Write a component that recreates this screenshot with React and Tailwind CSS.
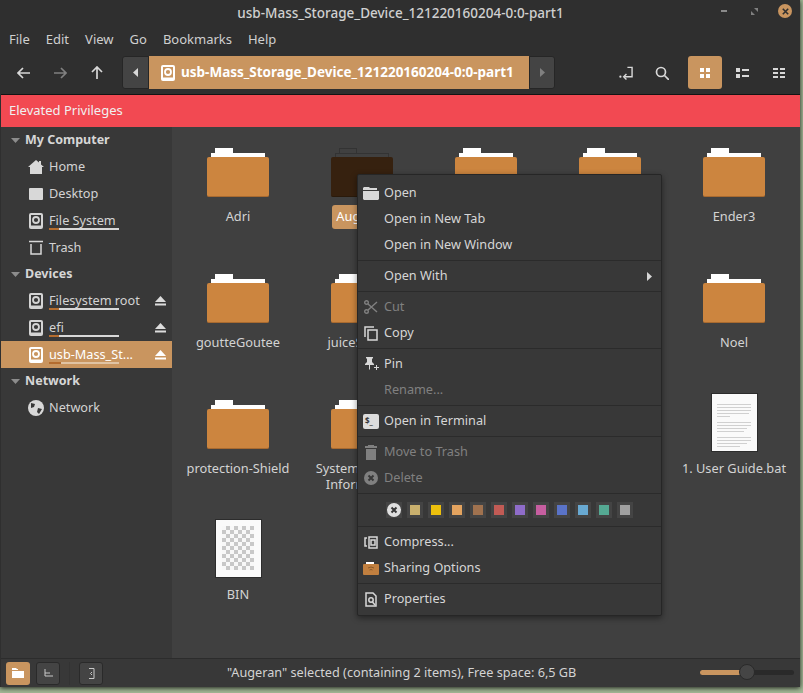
const font = { fontFamily: '"Noto Sans", "Open Sans", sans-serif' };

function DriveIcon({ color = "#d4d4d4", inner = "#383838" }) {
  return (
    <svg width="14" height="16" viewBox="0 0 14 16" className="shrink-0">
      <rect x="0" y="0" width="14" height="16" rx="2" fill={color} />
      <rect x="2" y="2" width="10" height="10.500" fill={inner} />
      <circle cx="7" cy="7" r="3" fill="none" stroke={color} strokeWidth="1.800" />
    </svg>
  );
}

function Folder({ dark }) {
  return (
    <div className="w-[62px] h-[49px] flex flex-col items-start">
      <div className={`ml-[8px] w-[18px] h-[5px] ${dark ? "border border-b-0 border-[#333333]" : "bg-white"}`} />
      <div className={`ml-[4px] w-[54px] h-[4px] ${dark ? "border border-b-0 border-[#333333]" : "bg-white"}`} />
      <div className={`w-[62px] h-[40px] rounded-[2px] ${dark ? "bg-[#36210f] border-b border-[#2a1a0b]" : "bg-[#cc853f] border-b border-[#a86a30]"}`} />
    </div>
  );
}

function FileTile({ name, dark, selected, children }) {
  return (
    <div className="flex flex-col items-center w-[124px]">
      <div className="h-[70px] flex items-end">{children || <Folder dark={dark} />}</div>
      <div
        className={`mt-[8px] pt-[3px] pb-[5px] text-center leading-[16px] text-[12.8px] px-[4px] rounded-[3px] ${
          selected ? "bg-[#c9955f] text-white" : "text-[#d3d3d3]"
        }`}
      >
        {name}
      </div>
    </div>
  );
}

function PaperIcon({ kind }) {
  const rows = [1, 1, 1, 0.95, 0.4, 0, 1, 1, 0.9, 0.8, 0, 1, 1, 0.9, 0.7];
  return (
    <div className="w-[47px] h-[59px] -mb-[3px] bg-[#fafafa] border border-[#2c2c2c] flex flex-col items-start">
      {kind === "doc" ? (
        <div className="pt-[10px] pl-[5px] flex flex-col gap-[2px] w-full">
          {rows.map((r, i) => (
            <div key={i} className={`h-[1px] ${r ? "bg-[#d0d0d0]" : ""}`} style={{ width: `${r * 34}px` }} />
          ))}
        </div>
      ) : (
        <div className="mt-[6px] ml-[6px] grid grid-cols-8 w-[32px]">
          {Array.from({ length: 88 }).map((_, i) => (
            <div
              key={i}
              className={`h-[4px] w-[4px] ${(Math.floor(i / 8) + i % 8) % 2 === 0 ? "bg-[#f8f8f8]" : "bg-[#c8c8c8]"}`}
            />
          ))}
        </div>
      )}
    </div>
  );
}

function Triangle() {
  return (
    <svg width="9" height="5" viewBox="0 0 9 5" className="shrink-0">
      <path d="M0 0h9L4.500 5z" fill="#8c8c8c" />
    </svg>
  );
}

function Eject({ color = "#dcdcdc" }) {
  return (
    <svg width="11" height="10" viewBox="0 0 11 10">
      <path d="M5.500 0L11 6H0z" fill={color} />
      <rect y="7.500" width="11" height="2" fill={color} />
    </svg>
  );
}

function Heading({ label }) {
  return (
    <div className="h-[26px] flex items-center pl-[10px] gap-[5px] text-[12.5px] font-bold text-[#d6d6d6]">
      <Triangle />
      <span>{label}</span>
    </div>
  );
}

function SideRow({ icon, label, usage, eject, active }) {
  return (
    <div className={`h-[27px] flex items-center pl-[27px] pr-[6px] relative ${active ? "bg-[#c9955f] text-white" : "text-[#d3d3d3]"}`}>
      <div className="w-[16px] mr-[5px] flex items-center justify-center">{icon}</div>
      <span className="text-[12.7px] w-[96px] whitespace-nowrap">{label}</span>
      {eject && (
        <span className="ml-auto flex">
          <Eject color={active ? "#fff" : "#dcdcdc"} />
        </span>
      )}
      {usage && (
        <div className={`absolute left-[48px] top-[21px] w-[70px] h-[2px] ${active ? "bg-[#e0c3a3]" : "bg-[#d8d8d8]"}`}>
          <div className={`${active ? "w-[12px]" : "w-[10px]"} h-[2px] bg-[#b36c2f]`} />
        </div>
      )}
    </div>
  );
}

function Item({ icon, label, disabled, arrow }) {
  return (
    <div className={`h-[26px] flex items-center pl-[5px] pr-[9px] text-[12.7px] ${disabled ? "text-[#808080]" : "text-[#d6d6d6]"}`}>
      <div className="w-[16px] h-[16px] mr-[5px] flex items-center justify-center">{icon}</div>
      <span>{label}</span>
      {arrow && (
        <svg width="5" height="9" viewBox="0 0 5 9" className="ml-auto">
          <path d="M0 0l5 4.500L0 9z" fill="#d6d6d6" />
        </svg>
      )}
    </div>
  );
}

function Sep() {
  return <div className="h-[1px] bg-[#2b2b2b] my-[2px]" />;
}

const swatches = ["#c9b06e", "#edc00c", "#e3a35f", "#a0724f", "#c25b55", "#8f6cc9", "#c75ea0", "#5a73c8", "#68a9d2", "#55a993", "#a0a0a0"];

function ContextMenu() {
  return (
    <div className="absolute left-[357px] top-[174px] w-[305px] bg-[#383838] border border-[#262626] rounded-[2px] shadow-[0_2px_6px_rgba(0,0,0,0.45)] pt-[5px] pb-[3px]" style={font}>
      <Item label="Open" icon={
        <svg width="16" height="13" viewBox="0 0 16 13"><path d="M1 0h5l1 1h7v2H0V1zM0 4h16v8l-1 1H1l-1-1z" fill="#d8d8d8" /></svg>
      } />
      <Item label="Open in New Tab" />
      <Item label="Open in New Window" />
      <Sep />
      <Item label="Open With" arrow />
      <Sep />
      <Item label="Cut" disabled icon={
        <svg width="14" height="14" viewBox="0 0 14 14" fill="none" stroke="#808080" strokeWidth="1.400"><circle cx="2.500" cy="2.500" r="1.800" /><circle cx="2.500" cy="11.500" r="1.800" /><path d="M4 4l9 8M4 10l9-8" /></svg>
      } />
      <Item label="Copy" icon={
        <svg width="14" height="15" viewBox="0 0 14 15" fill="none" stroke="#d8d8d8" strokeWidth="1.500"><path d="M1 11V1h9" /><rect x="4" y="4" width="9" height="10" /></svg>
      } />
      <Sep />
      <Item label="Pin" icon={
        <svg width="15" height="14" viewBox="0 0 15 14" fill="#d8d8d8"><path d="M3 0h6v1L8 2v3l2 2v1H6v4L5 13V8H1V7l2-2V2L2 1V0z" /><path d="M10 10h2V8h1v2h2v1h-2v2h-1v-2h-2z" /></svg>
      } />
      <Item label="Rename..." disabled />
      <Sep />
      <Item label="Open in Terminal" icon={
        <div className="w-[16px] h-[15px] bg-[#dcdcdc] rounded-[2px] flex items-center pl-[2px] text-[8px] font-bold text-[#383838] leading-none">$_</div>
      } />
      <Sep />
      <Item label="Move to Trash" disabled icon={
        <svg width="14" height="15" viewBox="0 0 14 15" fill="#808080"><rect x="4" y="0" width="6" height="1" /><rect x="1" y="1" width="12" height="2" /><rect x="2" y="4" width="10" height="11" /></svg>
      } />
      <Item label="Delete" disabled icon={
        <svg width="14" height="14" viewBox="0 0 14 14"><circle cx="7" cy="7" r="7" fill="#808080" /><path d="M4.500 4.500l5 5M9.500 4.500l-5 5" stroke="#383838" strokeWidth="2" /></svg>
      } />
      <Sep />
      <div className="h-[28px] flex items-center pl-[28px] gap-[5px]">
        <div className="w-[16px] h-[16px] bg-[#444] flex items-center justify-center">
          <svg width="14" height="14" viewBox="0 0 14 14"><circle cx="7" cy="7" r="7" fill="#e0e0e0" /><path d="M4.500 4.500l5 5M9.500 4.500l-5 5" stroke="#383838" strokeWidth="2" /></svg>
        </div>
        {swatches.map((c) => (
          <div key={c} className="w-[16px] h-[16px] bg-[#444] flex items-center justify-center">
            <div className="w-[10px] h-[10px]" style={{ backgroundColor: c }} />
          </div>
        ))}
      </div>
      <Sep />
      <Item label="Compress..." icon={
        <svg width="14" height="13" viewBox="0 0 14 13" fill="none" stroke="#d8d8d8" strokeWidth="1.500"><path d="M3 2H1v8h2M5 1h8v11H5z" /><rect x="7" y="4" width="4" height="5" /></svg>
      } />
      <Item label="Sharing Options" icon={
        <svg width="16" height="13" viewBox="0 0 16 13"><rect x="3" y="0" width="8" height="2" fill="#fff" /><rect x="0" y="2" width="16" height="11" rx="1" fill="#c17f3f" /><path d="M5 6q3-2 6 0M6.500 8q1.500-1 3 0" stroke="#8a5a2a" fill="none" /></svg>
      } />
      <Sep />
      <Item label="Properties" icon={
        <svg width="12" height="15" viewBox="0 0 12 15" fill="none" stroke="#d8d8d8" strokeWidth="1.500"><path d="M1 1h7l3 3v10H1z" /><circle cx="6" cy="8" r="2.200" /><path d="M7.500 10l2.500 3" /></svg>
      } />
    </div>
  );
}

export default function App() {
  return (
    <div className="w-[803px] h-[693px] bg-[#a3b896] relative overflow-hidden" style={font}>
      <div className="absolute left-0 top-0 w-[800px] h-[687px] bg-[#2f2f2f] flex flex-col pl-[1px] shadow-[0_1px_5px_rgba(0,0,0,0.85)]">
        {/* title bar */}
        <div className="h-[27px] relative flex items-center justify-center text-[13.5px] text-[#d0d0d0]">
          <span className="font-medium">usb-Mass_Storage_Device_121220160204-0:0-part1</span>
          <div className="absolute right-[8px] top-[4px] flex items-center">
            <div className="w-[6px] h-[2px] bg-[#8a8a8a]" />
            <svg width="7" height="7" viewBox="0 0 7 7" className="ml-[24px]"><path d="M3 0h4v4zM0 3l4 4H0z" fill="#808080" /></svg>
            <div className="ml-[20px] w-[14px] h-[14px] rounded-full bg-[#c9955f] flex items-center justify-center">
              <svg width="7" height="7" viewBox="0 0 7 7"><path d="M.8.8l5.400 5.400M6.200.8L.8 6.200" stroke="#2f2f2f" strokeWidth="1.600" /></svg>
            </div>
          </div>
        </div>
        {/* menu */}
        <div className="h-[26px] flex items-center gap-[16px] pl-[8px] text-[13px] text-[#cfcfcf]">
          <span>File</span>
          <span>Edit</span>
          <span>View</span>
          <span>Go</span>
          <span>Bookmarks</span>
          <span>Help</span>
        </div>
        {/* toolbar */}
        <div className="h-[42px] flex items-start border-b border-[#141414] pt-[3px]">
          <div className="h-[33px] flex items-center pl-[16px]">
            <svg width="13" height="12" viewBox="0 0 13 12" fill="none" stroke="#d8d8d8" strokeWidth="1.700"><path d="M6 1L1 6l5 5M1 6h12" /></svg>
            <svg width="13" height="12" viewBox="0 0 13 12" fill="none" stroke="#808080" strokeWidth="1.700" className="ml-[24px]"><path d="M7 1l5 5-5 5M12 6H0" /></svg>
            <svg width="12" height="13" viewBox="0 0 12 13" fill="none" stroke="#d8d8d8" strokeWidth="1.700" className="ml-[24px]"><path d="M1 6l5-5 5 5M6 1v12" /></svg>
          </div>
          <div className="ml-[19px] flex h-[33px]">
            <div className="w-[27px] bg-[#444444] border border-[#262626] rounded-l-[3px] flex items-center justify-center">
              <svg width="5" height="9" viewBox="0 0 5 9"><path d="M5 0L0 4.500 5 9z" fill="#d8d8d8" /></svg>
            </div>
            <div className="w-[380px] bg-[#c9955f] flex items-center pl-[12px] gap-[6px] text-white text-[13.5px] font-bold whitespace-nowrap">
              <DriveIcon color="#fff" inner="#c9955f" />
              <span>usb-Mass_Storage_Device_121220160204-0:0-part1</span>
            </div>
            <div className="w-[26px] bg-[#444444] border border-[#262626] rounded-r-[3px] flex items-center justify-center">
              <svg width="5" height="9" viewBox="0 0 5 9"><path d="M0 0l5 4.500L0 9z" fill="#808080" /></svg>
            </div>
          </div>
          <div className="ml-[64px] h-[33px] flex items-center gap-[22px]">
            <svg width="14" height="14" viewBox="0 0 15 14" fill="none" stroke="#d8d8d8" strokeWidth="1.500"><path d="M9 1h5v10H6" /><path d="M8 8l-3 3 3 3" /><circle cx="1.500" cy="11" r="1.200" fill="#d8d8d8" stroke="none" /></svg>
            <svg width="14" height="14" viewBox="0 0 14 14" fill="none" stroke="#d8d8d8" strokeWidth="1.700"><circle cx="6" cy="6" r="4.500" /><path d="M9.500 9.500L14 14" /></svg>
          </div>
          <div className="ml-[19px] w-[34px] h-[33px] bg-[#c9955f] rounded-[3px] grid grid-cols-[4px_4px] place-content-center gap-[2px]">
            <div className="w-[4px] h-[4px] bg-white" />
            <div className="w-[4px] h-[4px] bg-white" />
            <div className="w-[4px] h-[4px] bg-white" />
            <div className="w-[4px] h-[4px] bg-white" />
          </div>
          <div className="ml-[14px] h-[33px] w-[13px] grid grid-cols-[4px_7px] content-center gap-x-[2px] gap-y-[2px]">
            <div className="h-[4px] bg-[#d8d8d8]" />
            <div className="h-[2px] bg-[#d8d8d8] mt-[1px]" />
            <div className="h-[4px] bg-[#d8d8d8]" />
            <div className="h-[2px] bg-[#d8d8d8] mt-[1px]" />
          </div>
          <div className="ml-[24px] h-[33px] w-[12px] grid grid-cols-[5px_5px] content-center gap-x-[2px] gap-y-[2px]">
            {[0, 1, 2, 3, 4, 5].map((i) => (
              <div key={i} className="h-[2px] bg-[#d8d8d8]" />
            ))}
          </div>
        </div>
        {/* infobar */}
        <div className="h-[32px] bg-[#f24952] flex items-center pl-[8px] text-[13px] text-[#f0f0f0]">Elevated Privileges</div>
        {/* body */}
        <div className="flex-1 flex min-h-0">
          <div className="w-[171px] bg-[#383838] shrink-0">
            <Heading label="My Computer" />
            <SideRow label="Home" icon={
              <svg width="16" height="14" viewBox="0 0 16 14" fill="#d8d8d8"><path d="M8 0l3 2.600V1h2v3.400L16 7h-2v7H2V7H0z" /></svg>
            } />
            <SideRow label="Desktop" icon={
              <svg width="14" height="12" viewBox="0 0 14 12" fill="#d8d8d8"><rect width="14" height="12" rx="1" /></svg>
            } />
            <SideRow label="File System" usage icon={<DriveIcon />} />
            <SideRow label="Trash" icon={
              <svg width="14" height="15" viewBox="0 0 14 15" fill="none" stroke="#d8d8d8" strokeWidth="1.500"><path d="M0 1.500h14" /><path d="M2 4v10h10V4" /></svg>
            } />
            <Heading label="Devices" />
            <SideRow label="Filesystem root" usage eject icon={<DriveIcon />} />
            <SideRow label="efi" usage eject icon={<DriveIcon />} />
            <SideRow label="usb-Mass_St..." usage eject active icon={<DriveIcon color="#fff" inner="#c9955f" />} />
            <Heading label="Network" />
            <SideRow label="Network" icon={
              <svg width="16" height="16" viewBox="0 0 16 16"><circle cx="8" cy="8" r="8" fill="#d8d8d8" /><path d="M3 3l4 1-1 3-3 1zM10 8l4 1-3 5-2-2z" fill="#383838" /></svg>
            } />
          </div>
          <div className="flex-1 bg-[#404040] grid grid-cols-[124px_124px_124px_124px_124px] auto-rows-[126px] pl-[4px] content-start">
            <FileTile name="Adri" />
            <FileTile name="Augeran" dark selected />
            <FileTile name="" />
            <FileTile name="" />
            <FileTile name="Ender3" />
            <FileTile name="goutteGoutee" />
            <FileTile name="juiceSource" />
            <FileTile name="" />
            <FileTile name="" />
            <FileTile name="Noel" />
            <FileTile name="protection-Shield" />
            <FileTile name={<>System Volume<br />Information</>} />
            <div />
            <div />
            <FileTile name="1. User Guide.bat"><PaperIcon kind="doc" /></FileTile>
            <FileTile name="BIN"><PaperIcon kind="pic" /></FileTile>
          </div>
        </div>
        {/* status bar */}
        <div className="h-[29px] bg-[#383838] border-t border-[#2c2c2c] flex items-center pl-[5px] relative text-[12.7px] text-[#d3d3d3]">
          <div className="w-[24px] h-[23px] rounded-[3px] bg-[#c9955f] flex items-center justify-center">
            <svg width="12" height="10" viewBox="0 0 12 10" fill="#fff"><path d="M0 0h4l1 1h1v1H0zM0 3h12v7H0z" /></svg>
          </div>
          <div className="ml-[6px] w-[24px] h-[23px] rounded-[3px] bg-[#444] border border-[#2a2a2a] flex items-center justify-center">
            <svg width="11" height="11" viewBox="0 0 11 11" fill="none" stroke="#c8c8c8"><path d="M2 1v7h8M2 5h5" /></svg>
          </div>
          <div className="ml-[9px] mr-[9px] w-[1px] h-[23px] bg-[#333]" />
          <div className="w-[24px] h-[23px] rounded-[3px] bg-[#444] border border-[#2a2a2a] flex items-center justify-center">
            <svg width="7" height="11" viewBox="0 0 7 11" fill="none" stroke="#c8c8c8"><path d="M1 .5h5v10H1M4 4L2.500 5.500 4 7" /></svg>
          </div>
          <span className="ml-[124px] whitespace-nowrap">"Augeran" selected (containing 2 items), Free space: 6,5 GB</span>
          <div className="absolute left-[699px] top-[11px] w-[94px] h-[5px] rounded-full bg-[#2a2a2a]">
            <div className="w-[40px] h-[5px] rounded-l-full bg-[#c9955f]" />
            <div className="absolute left-[39px] top-[-6px] w-[16px] h-[16px] rounded-full bg-[#454545] border border-[#2a2a2a]" />
          </div>
        </div>
      </div>
      <ContextMenu />
    </div>
  );
}
